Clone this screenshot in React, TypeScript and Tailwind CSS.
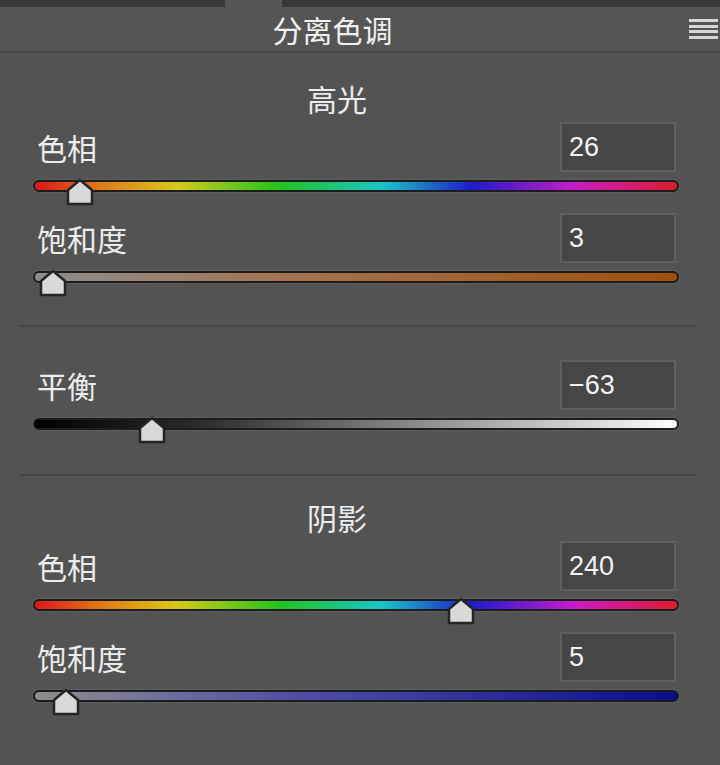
import React from "react";

type SliderProps = {
  label: string;
  value: number;
  min: number;
  max: number;
  track: string;
  display?: string;
  className?: string;
};

function Thumb() {
  return (
    <svg width="30" height="28" viewBox="0 0 30 28">
      <path
        d="M3 26 V12 L15 2 L27 12 V26 Z"
        fill="#d9d9d9"
        stroke="#242424"
        strokeWidth="2.5"
        strokeLinejoin="round"
      />
    </svg>
  );
}

function SliderRow({ label, value, min, max, track, display, className }: SliderProps) {
  const pct = (value - min) / (max - min);
  return (
    <div className={className}>
      <div className="flex h-[50px] items-center justify-between pl-[4px] pr-[3px]">
        <span className="text-[30px] leading-none text-[#ececec]">{label}</span>
        <div className="flex h-[50px] w-[116px] items-center border-2 border-[#5f5f5f] bg-[#464646] pl-[7px]">
          <span className="font-['Liberation_Sans',sans-serif] text-[27px] leading-none text-[#f2f2f2]">
            {display ?? value}
          </span>
        </div>
      </div>
      <div className="relative mt-[8px] h-[12px]">
        <div className={`h-[12px] rounded-full border-2 border-[#1c1c1c] shadow-[0_0_0_1px_#5e5e5e] ${track}`} />
        <div
          className="absolute top-[-2px] -translate-x-1/2"
          style={{ left: `calc(1px + (100% - 6px) * ${pct})` }}
        >
          <Thumb />
        </div>
      </div>
    </div>
  );
}

function Divider({ className }: { className?: string }) {
  return <div className={`-ml-[13px] -mr-[18px] h-[2px] bg-[#464646] ${className ?? ""}`} />;
}

const hueTrack =
  "bg-[linear-gradient(to_right,#d81818,#e07818_10%,#d8c81c_22%,#22c41c_38%,#1cc4c8_54%,#1c1cc8_68%,#c81cc8_84%,#dc1c2c)]";

export default function App() {
  return (
    <div className="h-[765px] w-[720px] overflow-hidden bg-[#535353] font-['Noto_Sans_CJK_SC','Noto_Sans',sans-serif]">
      {/* tab strip */}
      <div className="flex h-[7px]">
        <div className="w-[225px] bg-[#383838]" />
        <div className="w-[57px] bg-[#555555]" />
        <div className="flex-1 bg-[#383838]" />
      </div>

      {/* panel header */}
      <div className="relative flex h-[46px] items-center justify-center border-b-2 border-[#464646] bg-[#555555]">
        <span className="ml-[-55px] text-[30px] leading-none text-[#f0f0f0]">分离色调</span>
        <div className="absolute right-[2px] top-[12px] flex w-[29px] flex-col gap-[2.5px]">
          <div className="h-[3px] bg-[#d6d6d6]" />
          <div className="h-[3px] bg-[#d6d6d6]" />
          <div className="h-[3px] bg-[#d6d6d6]" />
          <div className="h-[3px] bg-[#d6d6d6]" />
        </div>
      </div>

      <div className="flex flex-col pl-[33px] pr-[41px]">
        <div className="mt-[30px] h-[30px] pr-[38px] text-center text-[30px] leading-[30px] text-[#ececec]">高光</div>
        <SliderRow className="mt-[9px]" label="色相" value={26} min={0} max={360} track={hueTrack} />
        <SliderRow
          className="mt-[21px]"
          label="饱和度"
          value={3}
          min={0}
          max={100}
          track="bg-[linear-gradient(to_right,#8e8e8e,#a47350_40%,#a0500c)]"
        />

        <Divider className="mt-[42px]" />

        <SliderRow
          className="mt-[33px]"
          label="平衡"
          value={-63}
          display="−63"
          min={-100}
          max={100}
          track="bg-[linear-gradient(to_right,#000000,#2a2a2a_25%,#9a9a9a_65%,#ffffff)]"
        />

        <Divider className="mt-[44px]" />

        <div className="mt-[26px] h-[30px] pr-[38px] text-center text-[30px] leading-[30px] text-[#ececec]">阴影</div>
        <SliderRow className="mt-[9px]" label="色相" value={240} min={0} max={360} track={hueTrack} />
        <SliderRow
          className="mt-[21px]"
          label="饱和度"
          value={5}
          min={0}
          max={100}
          track="bg-[linear-gradient(to_right,#8e8e8e,#5050a8_40%,#0c0c90)]"
        />
      </div>
    </div>
  );
}
